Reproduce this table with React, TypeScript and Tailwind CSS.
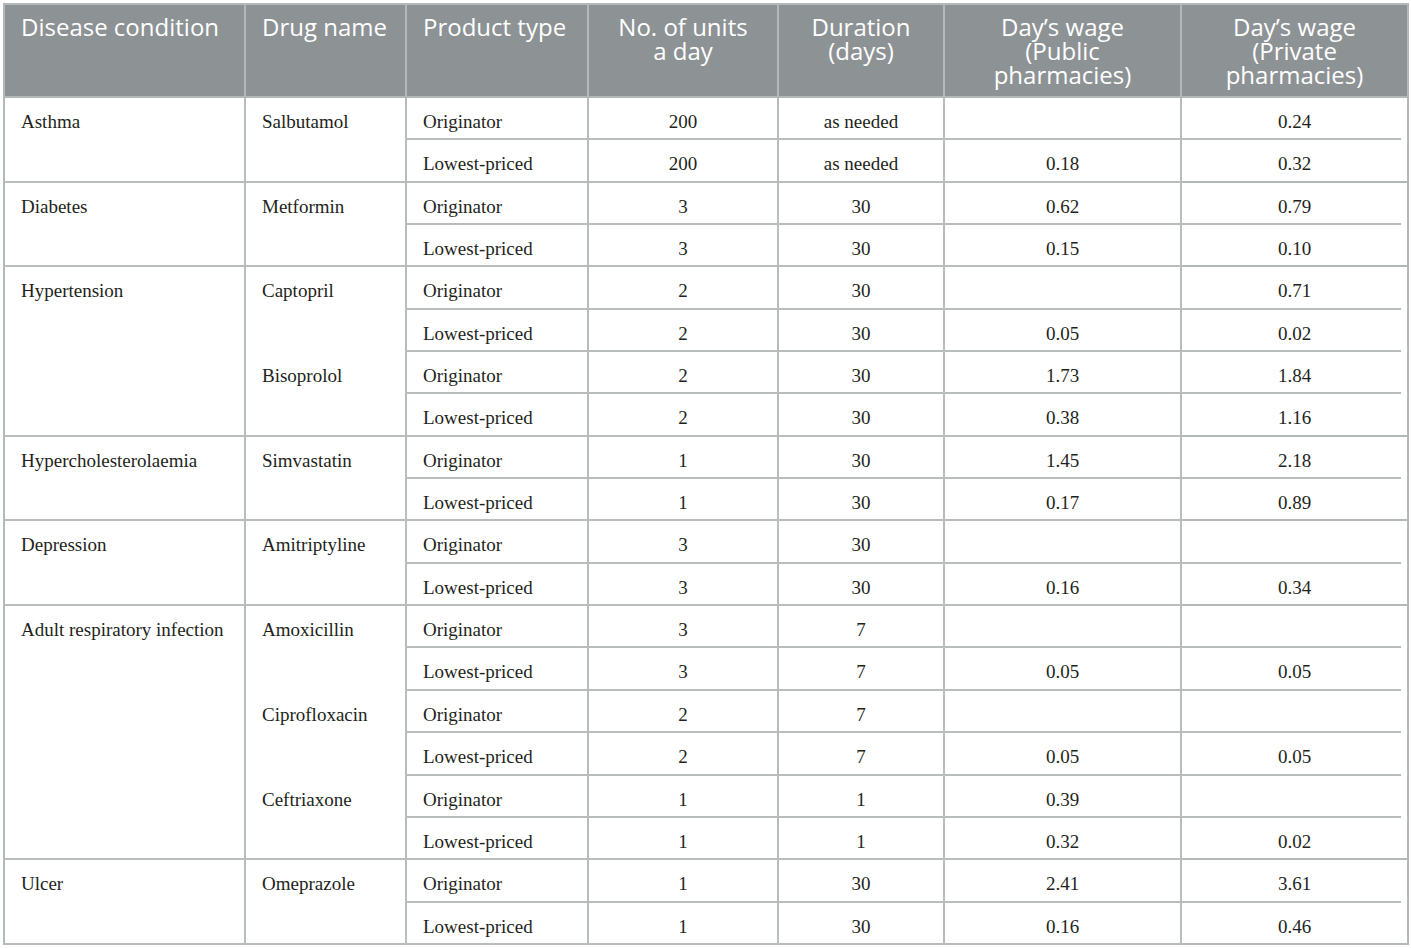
import React from 'react'

type Row = { type: string; units: string; days: string; pub: string; priv: string }
type Drug = { name: string; rows: Row[] }
type Group = { disease: string; drugs: Drug[] }

const o = (units: string, days: string, pub: string, priv: string): Row => ({ type: 'Originator', units, days, pub, priv })
const l = (units: string, days: string, pub: string, priv: string): Row => ({ type: 'Lowest-priced', units, days, pub, priv })

const groups: Group[] = [
  { disease: 'Asthma', drugs: [{ name: 'Salbutamol', rows: [o('200', 'as needed', '', '0.24'), l('200', 'as needed', '0.18', '0.32')] }] },
  { disease: 'Diabetes', drugs: [{ name: 'Metformin', rows: [o('3', '30', '0.62', '0.79'), l('3', '30', '0.15', '0.10')] }] },
  {
    disease: 'Hypertension',
    drugs: [
      { name: 'Captopril', rows: [o('2', '30', '', '0.71'), l('2', '30', '0.05', '0.02')] },
      { name: 'Bisoprolol', rows: [o('2', '30', '1.73', '1.84'), l('2', '30', '0.38', '1.16')] },
    ],
  },
  { disease: 'Hypercholesterolaemia', drugs: [{ name: 'Simvastatin', rows: [o('1', '30', '1.45', '2.18'), l('1', '30', '0.17', '0.89')] }] },
  { disease: 'Depression', drugs: [{ name: 'Amitriptyline', rows: [o('3', '30', '', ''), l('3', '30', '0.16', '0.34')] }] },
  {
    disease: 'Adult respiratory infection',
    drugs: [
      { name: 'Amoxicillin', rows: [o('3', '7', '', ''), l('3', '7', '0.05', '0.05')] },
      { name: 'Ciprofloxacin', rows: [o('2', '7', '', ''), l('2', '7', '0.05', '0.05')] },
      { name: 'Ceftriaxone', rows: [o('1', '1', '0.39', ''), l('1', '1', '0.32', '0.02')] },
    ],
  },
  { disease: 'Ulcer', drugs: [{ name: 'Omeprazole', rows: [o('1', '30', '2.41', '3.61'), l('1', '30', '0.16', '0.46')] }] },
]

const spanClass: Record<number, string> = { 2: 'row-span-2', 4: 'row-span-4', 6: 'row-span-6' }

const headers = [
  { label: ['Disease condition'], center: false },
  { label: ['Drug name'], center: false },
  { label: ['Product type'], center: false },
  { label: ['No. of units', 'a day'], center: true },
  { label: ['Duration', '(days)'], center: true },
  { label: ['Day\u2019s wage', '(Public', 'pharmacies)'], center: true },
  { label: ['Day\u2019s wage', '(Private', 'pharmacies)'], center: true },
]

export default function App() {
  return (
    <div className="bg-white w-[1411px] h-[948px] pt-[3px] pl-[3px]">
      <div
        className="grid w-[1406px] grid-cols-[241px_161px_182px_190px_166px_237px_227px] grid-rows-[93px_repeat(20,42.35px)] border-l-2 border-t-2 border-[#b3b9b9] text-[19px] leading-[24px] text-[#231f20]"
        style={{ fontFamily: '"Liberation Serif", serif' }}
      >
        {headers.map((h, i) => (
          <div
            key={i}
            className={`bg-[#8d9295] border-r-2 border-b-2 border-[#b3b9b9] pt-[10px] px-4 text-white text-[24px] leading-[24px] ${h.center ? 'text-center' : 'text-left'}`}
            style={{ fontFamily: '"Open Sans", sans-serif' }}
          >
            {h.label.map((t) => (
              <div key={t}>{t}</div>
            ))}
          </div>
        ))}

        {groups.map((g) => {
          const total = g.drugs.reduce((n, d) => n + d.rows.length, 0)
          return (
            <React.Fragment key={g.disease}>
              <div className={`${spanClass[total]} border-r-2 border-b-2 border-[#b9bcbc] pt-[12px] px-4`}>{g.disease}</div>
              {g.drugs.map((d, di) => {
                const lastDrug = di === g.drugs.length - 1
                return (
                  <React.Fragment key={d.name}>
                    <div
                      className={`row-span-2 border-r-2 border-[#b9bcbc] pt-[12px] px-4 ${lastDrug ? 'border-b-2' : ''}`}
                    >
                      {d.name}
                    </div>
                    {d.rows.map((r, ri) => {
                      const groupEnd = lastDrug && ri === d.rows.length - 1
                      return (
                        <React.Fragment key={ri}>
                          <div className="border-r-2 border-b-2 border-[#b9bcbc] pt-[12px] px-4">{r.type}</div>
                          <div className="border-r-2 border-b-2 border-[#b9bcbc] pt-[12px] text-center">{r.units}</div>
                          <div className="border-r-2 border-b-2 border-[#b9bcbc] pt-[12px] text-center">{r.days}</div>
                          <div className="border-r-2 border-b-2 border-[#b9bcbc] pt-[12px] text-center">{r.pub}</div>
                          {groupEnd ? (
                            <div className="border-r-2 border-b-2 border-[#b3b9b9] pt-[12px] text-center">{r.priv}</div>
                          ) : (
                            <div className="border-r-2 border-[#b3b9b9] flex flex-col">
                              <div className="flex-1 pt-[12px] text-center">{r.priv}</div>
                              <div className="h-[2px] mr-[6px] bg-[#b9bcbc]" />
                            </div>
                          )}
                        </React.Fragment>
                      )
                    })}
                  </React.Fragment>
                )
              })}
            </React.Fragment>
          )
        })}
      </div>
    </div>
  )
}
